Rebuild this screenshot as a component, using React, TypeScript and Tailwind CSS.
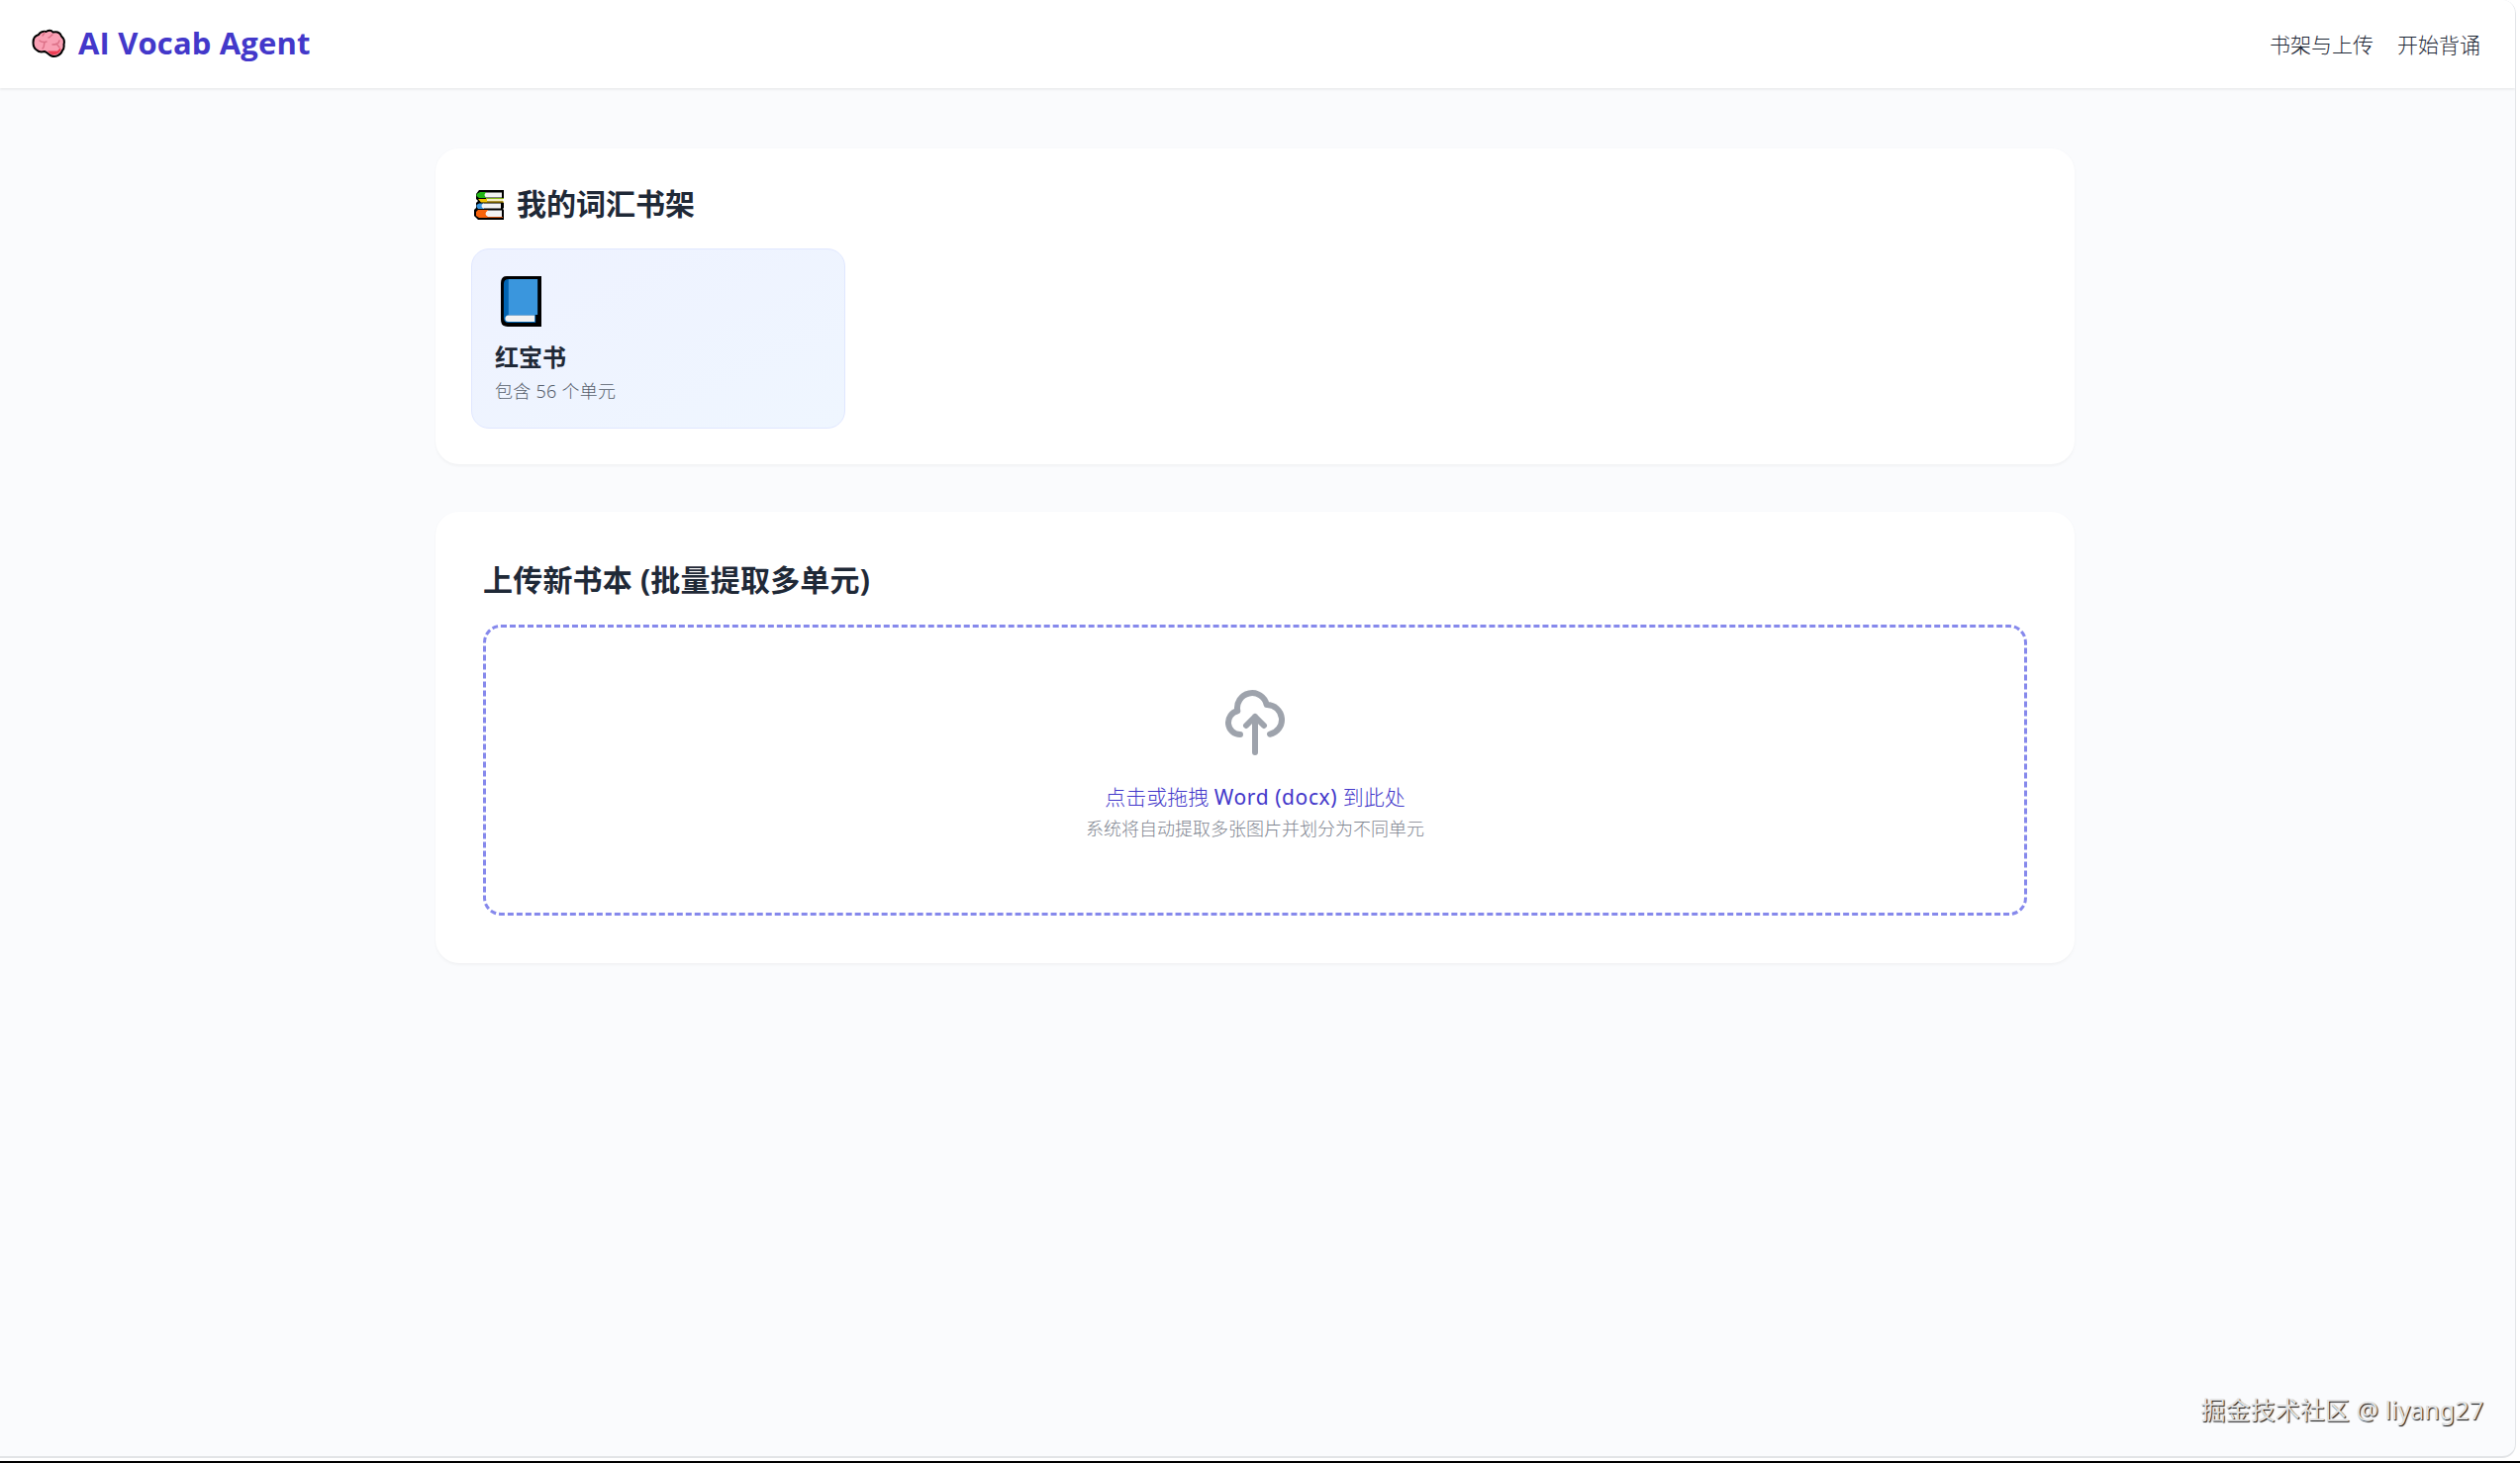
import type { ReactNode } from "react";

function BrainIcon() {
  return (
    <svg className="-mt-0.5 h-9 w-9 shrink-0" viewBox="0 0 36 36" fill="none">
      <path
        d="M2.500 17C2.500 13 4 10 8 9C9 7 12 5 15.500 6C18 4.500 21 4.500 22.500 6.500C27 5.500 30 7.500 31 10.500C34 13 34.500 15.500 33.500 19C34 22 33 24 32 25C30.500 30 25 32 21 30.500C18.500 29.500 17 27 14 26C10 27 7.500 26 6 24.500C3.500 23 2.500 20.500 2.500 17Z"
        fill="#f9a0b4"
        stroke="#000"
        strokeWidth="2"
      />
      <path d="M17 25.500H27L30 22.500C32 25 27 29.500 23 29.500C20 29 18.500 27 17 25.500Z" fill="#ed3f55" />
      <path
        d="M9 15C11 17 13 17 16 16M14 17C13 20 14 22 12 23M22 9C20 10 20 12 18 12M29 15C28 19 25 19 22 19M26 18C27 20 28 20 29 22M14 7L12 10"
        stroke="#dc7188"
        strokeWidth="1.500"
        strokeLinecap="round"
      />
    </svg>
  );
}

function BooksIcon() {
  return (
    <svg className="mt-0.5 h-[30px] w-[31px] shrink-0" viewBox="0 0 31 30">
      <path d="M5 0H30V8L29 9V12L30 13V18L29 19L30 20V30H4L0 26V20L2 18V13L4 11L2 9V4Z" fill="#000" />
      <path d="M6 2H12V8H5L2.500 6V4Z" fill="#22b514" />
      <path d="M12 2.500H28V7.500H12Q9 5 12 2.500Z" fill="#f3f3f3" />
      <path d="M12 8H30V9H12Z" fill="#86b817" />
      <path d="M4 9H13V12.500H7Z" fill="#f0c000" />
      <path d="M13 9H29V11.500H13Z" fill="#f6eec4" />
      <path d="M13 11.500H30V12.500H13Z" fill="#d9ad00" />
      <path d="M5 13.500H10V19H4L2.500 17V15Z" fill="#3a96dd" />
      <path d="M9 13.500H27V18.500H9Q6 16 9 13.500Z" fill="#f3f3f3" />
      <path d="M4 20H14V28H5L2 26V22Z" fill="#f7630c" />
      <path d="M14 20.500H28V27H14Q9 24 14 20.500Z" fill="#f3f3f3" />
      <path d="M13 27H29V28H13Z" fill="#ca5010" />
    </svg>
  );
}

function BookIcon() {
  return (
    <svg className="ml-1.5 h-[51px] w-[41px]" viewBox="0 0 42 51" preserveAspectRatio="none">
      <path d="M6 0H42V51H7Q0 51 0 44V7Q0 0 6 0Z" fill="#000" />
      <path d="M8 3H38V39H36V47H8Q3 47 3 42V8Q3 3 8 3Z" fill="#0063b1" />
      <path d="M8 3H38V39H8Z" fill="#3a96dd" />
      <path d="M8 39.500H35V46H8Q4.500 46 4.500 43Q4.500 39.500 8 39.500Z" fill="#f2f2f2" />
    </svg>
  );
}

function CloudUploadIcon() {
  return (
    <svg
      className="h-[72px] w-[72px] text-[#9ea3ac]"
      viewBox="0 0 24 24"
      fill="none"
      stroke="currentColor"
      strokeWidth="2"
      strokeLinecap="round"
      strokeLinejoin="round"
    >
      <path d="M7 16a4 4 0 01-.88-7.903A5 5 0 1115.900 6L16 6a5 5 0 011 9.900M15 13l-3-3m0 0l-3 3m3-3v12" />
    </svg>
  );
}

function Card({ className, children }: { className: string; children: ReactNode }) {
  return <section className={`rounded-3xl bg-white shadow-[0_1.5px_3px_rgba(0,0,0,0.04)] ${className}`}>{children}</section>;
}

export default function App() {
  return (
    <div className="h-[1478px] overflow-hidden border-b-2 border-black bg-white font-['Noto_Sans','Noto_Sans_CJK_SC',sans-serif]">
      <div className="relative flex h-[1473px] w-[2542px] flex-col overflow-hidden rounded-r-[14px] border-r border-b-2 border-[#e2e4e7] bg-[#fafbfd]">
        <header className="flex h-[89px] shrink-0 items-center justify-between bg-white pr-[35px] pl-[31px] shadow-[0_1.5px_2px_rgba(0,0,0,0.06)]">
          <div className="flex items-center gap-3">
            <BrainIcon />
            <h1 className="-mt-0.5 font-['Open_Sans',sans-serif] text-[31px] font-bold tracking-[0.15px] text-[#4338ca]">
              AI Vocab Agent
            </h1>
          </div>
          <nav className="flex gap-6 pt-0.5 text-[21px] font-light text-[#1f2937]">
            <a href="#books">书架与上传</a>
            <a href="#study">开始背诵</a>
          </nav>
        </header>

        <main className="ml-[440px] flex w-[1656px] flex-col gap-12 pt-[61px]">
          <Card className="h-[319px] p-9">
            <h2 className="-mt-px flex h-[42px] items-center gap-3 pl-[3px] text-[30px] font-bold text-[#1f2937]">
              <BooksIcon />
              <span className="-mt-px">我的词汇书架</span>
            </h2>
            <div className="mt-6 h-[182px] w-[378px] rounded-[18px] border border-[#e0e7ff] bg-linear-to-br from-[#eef2ff] to-[#eff6ff] px-[23px] pt-[27px]">
              <BookIcon />
              <h3 className="mt-[15px] text-2xl font-bold text-[#1f2937]">红宝书</h3>
              <p className="mt-1 text-lg font-light tracking-[0.25px] text-[#565e6b]">包含 56 个单元</p>
            </div>
          </Card>

          <Card className="h-[456px] p-12">
            <h2 className="h-[42px] text-[30px] leading-[42px] font-bold tracking-[0.2px] text-[#1f2937]">
              上传新书本 (批量提取多单元)
            </h2>
            <div className="mt-6 flex h-[294px] flex-col items-center rounded-[18px] border-[3px] border-dashed border-[#8689ec] pt-[60px]">
              <CloudUploadIcon />
              <p className="mt-6 text-[21px] leading-[30px] font-light text-[#4338ca]">
                点击或拖拽 <span className="font-normal tracking-[0.6px]">Word (docx)</span> 到此处
              </p>
              <p className="mt-[5px] text-lg leading-6 font-light text-[#7f8691]">系统将自动提取多张图片并划分为不同单元</p>
            </div>
          </Card>
        </main>

        <p className="absolute right-[32px] bottom-[27px] text-[25px] leading-10 tracking-[0.05px] text-[#e2e2e2] [text-shadow:1px_1px_1px_#111]">
          掘金技术社区 @ liyang27
        </p>
      </div>
    </div>
  );
}
